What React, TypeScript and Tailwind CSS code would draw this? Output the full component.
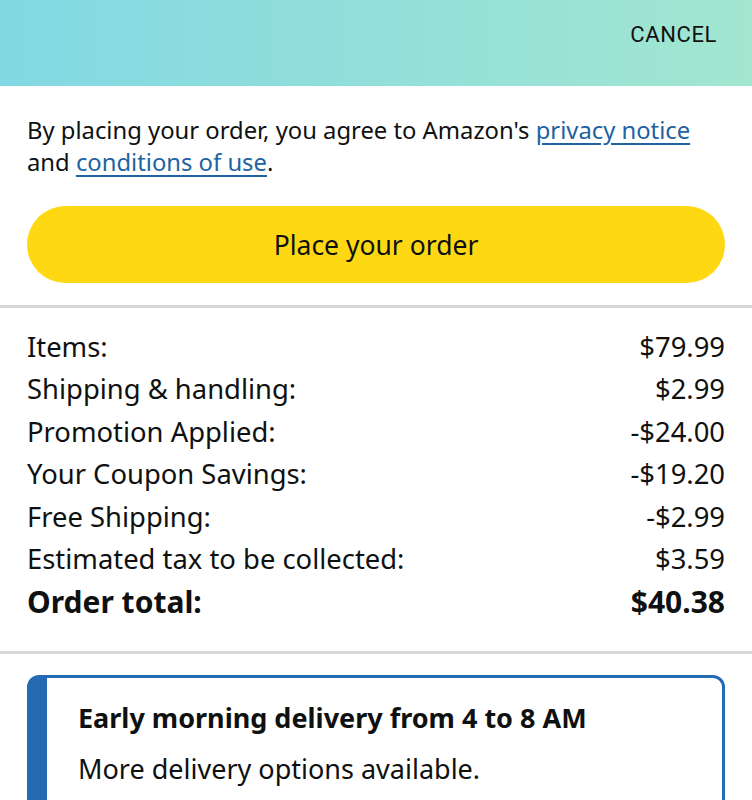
const rows: [string, string][] = [
  ["Items:", "$79.99"],
  ["Shipping & handling:", "$2.99"],
  ["Promotion Applied:", "-$24.00"],
  ["Your Coupon Savings:", "-$19.20"],
  ["Free Shipping:", "-$2.99"],
  ["Estimated tax to be collected:", "$3.59"],
]

export default function App() {
  return (
    <div
      className="w-[752px] h-[800px] overflow-hidden bg-white text-[#0f1111]"
      style={{ fontFamily: '"Noto Sans", sans-serif' }}
    >
      {/* Header */}
      <div className="h-[86px] bg-gradient-to-r from-[#82d8e3] to-[#a2e6d0] flex items-start justify-end pr-[35px] pt-[20px]">
        <span className="text-[22px] leading-[30px] tracking-[0.6px] text-[#111]" style={{ fontFamily: 'Roboto, sans-serif' }}>
          CANCEL
        </span>
      </div>

      {/* Agreement + button */}
      <div className="px-[27px] pt-[28px] pb-[22px]">
        <p className="text-[23.8px] leading-[32px]">
          By placing your order, you agree to Amazon's{" "}
          <span className="text-[#2162a1] underline underline-offset-[4px]">privacy notice</span>{" "}
          and <span className="text-[#2162a1] underline underline-offset-[4px]">conditions of use</span>.
        </p>
        <button className="mt-[28px] w-full h-[77px] pt-[3px] rounded-full bg-[#ffd814] text-[26.5px] flex items-center justify-center">
          Place your order
        </button>
      </div>

      <div className="h-[3px] bg-[#d5d9d9]" />

      {/* Summary */}
      <div className="px-[27px] pt-[18px] pb-[27px]">
        {rows.map(([label, value]) => (
          <div key={label} className="flex justify-between text-[27.4px] leading-[42.4px]">
            <span>{label}</span>
            <span>{value}</span>
          </div>
        ))}
        <div className="flex justify-between text-[30px] leading-[44px] font-bold">
          <span>Order total:</span>
          <span>$40.38</span>
        </div>
      </div>

      <div className="h-[3px] bg-[#d5d9d9]" />

      {/* Delivery card */}
      <div className="px-[27px] pt-[21px]">
        <div className="rounded-[12px] border-[3px] border-l-[20px] border-[#246bb3] pl-[31px] pr-[20px] pt-[23px] pb-[20px] h-[200px]">
          <div className="text-[27px] leading-[34px] font-bold">Early morning delivery from 4 to 8 AM</div>
          <div className="mt-[17px] text-[27px] leading-[34px]">More delivery options available.</div>
        </div>
      </div>
    </div>
  )
}
